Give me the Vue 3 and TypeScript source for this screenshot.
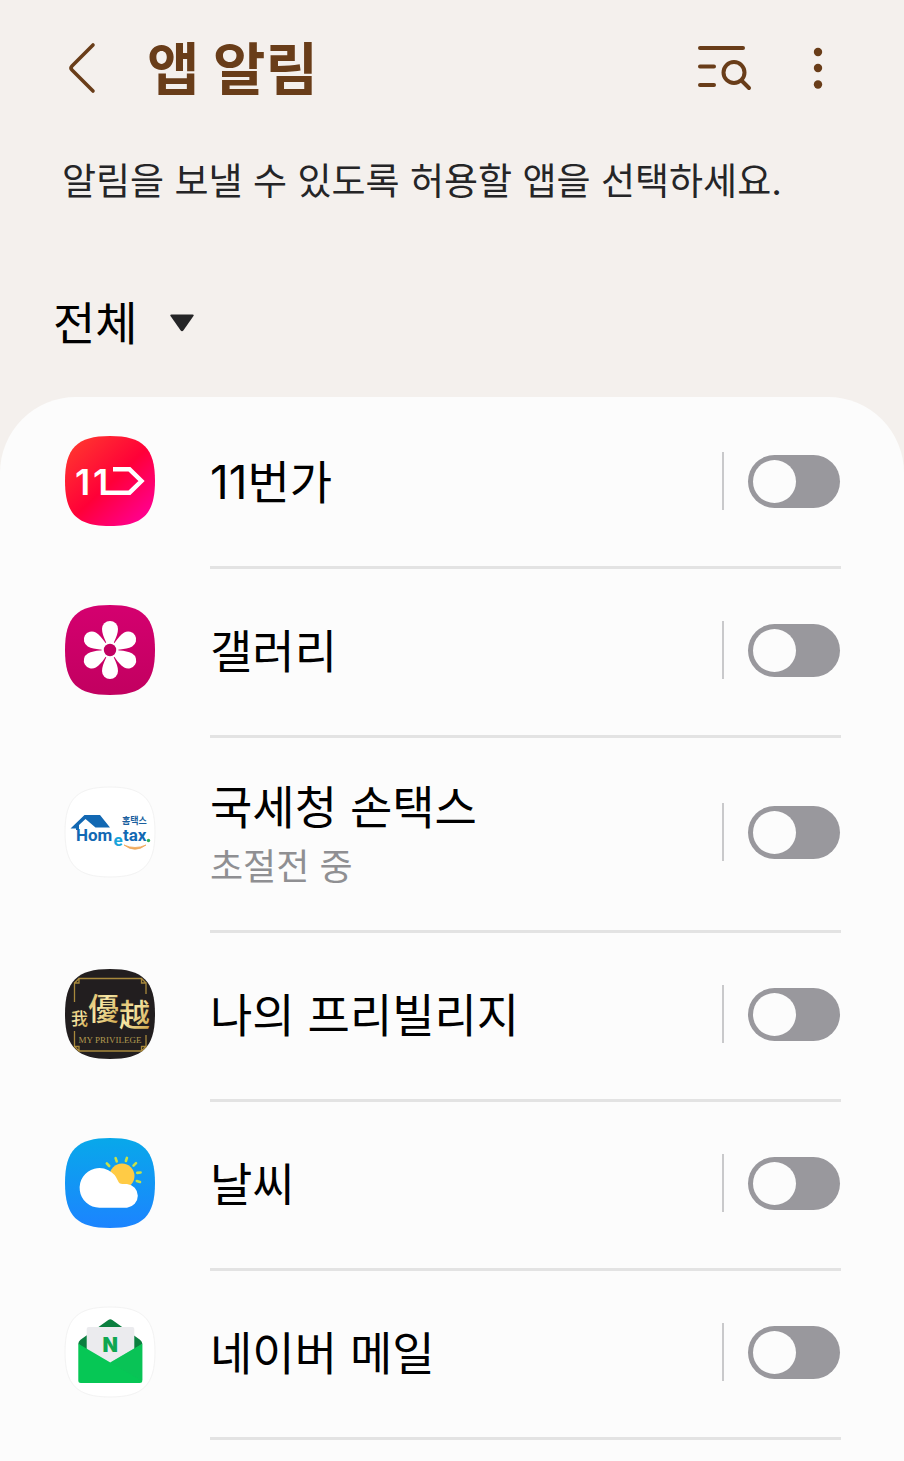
<script setup lang="ts">
import { reactive, ref } from 'vue'

interface AppEntry {
  id: string
  name: string
  status?: string
  enabled: boolean
}

const filter = ref('all')

const apps = reactive<AppEntry[]>([
  { id: 'eleven', name: '11번가', enabled: false },
  { id: 'gallery', name: '갤러리', enabled: false },
  { id: 'hometax', name: '국세청 손택스', status: '초절전 중', enabled: false },
  { id: 'privilege', name: '나의 프리빌리지', enabled: false },
  { id: 'weather', name: '날씨', enabled: false },
  { id: 'mail', name: '네이버 메일', enabled: false },
])

const squircle = 'M45 0C78 0 90 12 90 45C90 78 78 90 45 90C12 90 0 78 0 45C0 12 12 0 45 0Z'
const petals = [0, 60, 120, 180, 240, 300]
</script>

<template>
  <main class="page">
    <header class="bar">
      <button class="icon-btn" type="button" aria-label="뒤로">
        <svg width="48" height="56" viewBox="0 0 48 56" class="line">
          <path d="M35 5L14 26Q12 28 14 30L35 51" stroke-width="3.6" />
        </svg>
      </button>
      <h1 class="title">앱 알림</h1>
      <button class="icon-btn" type="button" aria-label="검색">
        <svg width="56" height="56" viewBox="0 0 56 56" class="line">
          <path d="M4 8H47M4 26.500H18M4 45H18M46 41L53 48" stroke-width="4" />
          <circle cx="38" cy="32.500" r="10.500" stroke-width="4" />
        </svg>
      </button>
      <button class="icon-btn more" type="button" aria-label="더보기">
        <svg width="24" height="56" viewBox="0 0 24 56" class="dots">
          <circle cx="12" cy="12" r="4.200" />
          <circle cx="12" cy="28" r="4.200" />
          <circle cx="12" cy="44.500" r="4.200" />
        </svg>
      </button>
    </header>

    <p class="intro">알림을 보낼 수 있도록 허용할 앱을 선택하세요.</p>

    <div class="filter">
      <select v-model="filter" class="filter-select" aria-label="앱 필터">
        <option value="all">전체</option>
      </select>
      <svg class="caret" width="24" height="18" viewBox="0 0 24 18" aria-hidden="true">
        <path d="M1.500 0.500H22.500Q24.500 0.500 23.300 2.300L13.500 16.300Q12 18.300 10.500 16.300L0.700 2.300Q-0.500 0.500 1.500 0.500Z" />
      </svg>
    </div>

    <ul class="card">
      <li v-for="app in apps" :key="app.id" class="item">
        <div class="row" :class="{ tall: app.status }">
          <svg class="app-icon" viewBox="0 0 90 90" aria-hidden="true">
            <template v-if="app.id === 'eleven'">
              <defs>
                <linearGradient id="eleven-bg" x1="0.15" y1="0.1" x2="0.9" y2="0.9">
                  <stop offset="0" stop-color="#ff3030" />
                  <stop offset="0.5" stop-color="#ff0038" />
                  <stop offset="1" stop-color="#ff0090" />
                </linearGradient>
              </defs>
              <path :d="squircle" fill="url(#eleven-bg)" />
              <text x="10 28" y="59" class="eleven-num">11</text>
              <path d="M37 56.700H64.500L76.500 45L64.500 33.300H48" fill="none" stroke="#fff" stroke-width="4.400" />
            </template>

            <template v-else-if="app.id === 'gallery'">
              <defs>
                <linearGradient id="gallery-bg" x1="0" y1="0" x2="0" y2="1">
                  <stop offset="0" stop-color="#d4006f" />
                  <stop offset="1" stop-color="#c20060" />
                </linearGradient>
              </defs>
              <path :d="squircle" fill="url(#gallery-bg)" />
              <path
                v-for="angle in petals"
                :key="angle"
                d="M45 45L40.500 36C38.700 32 37 28 37 24A8 8 0 0 1 53 24C53 28 51.300 32 49.500 36Z"
                fill="#fff"
                :transform="`rotate(${angle} 45 45)`"
              />
              <circle cx="45" cy="45" r="8.500" fill="#fff" />
              <circle cx="45" cy="45" r="6.200" fill="#c20062" />
            </template>

            <template v-else-if="app.id === 'hometax'">
              <path :d="squircle" fill="#fff" stroke="#f3f3f3" stroke-width="1" />
              <path d="M5.500 41.500L19.500 28H35L45 40.500H30.500L20.500 32L14 38V43H11V41.500Z" fill="#1268b3" />
              <text x="11" y="54" class="tax-word">Hom</text>
              <text x="48.500" y="58.500" class="tax-word tax-e">e</text>
              <text x="58" y="54" class="tax-word">tax</text>
              <circle cx="83.500" cy="53.500" r="1.700" fill="#2fae5c" />
              <path d="M59 58Q70 66.500 81 58Q70 63 59 58Z" fill="#f0a85a" stroke="#f0a85a" stroke-width="0.800" />
              <text x="57" y="37" class="tax-kr">홈택스</text>
            </template>

            <template v-else-if="app.id === 'privilege'">
              <defs>
                <linearGradient id="gold" x1="0" y1="0" x2="1" y2="1">
                  <stop offset="0" stop-color="#c99d3e" />
                  <stop offset="0.45" stop-color="#f6e7a6" />
                  <stop offset="1" stop-color="#c89a3a" />
                </linearGradient>
              </defs>
              <path :d="squircle" fill="#221e1f" />
              <path
                d="M9.500 33V14H14V9.500H76.500V14H81V25M9.500 62V77.500H14V82H76.500V77.500H81V66M9.500 14L14 9.500M76.500 9.500L81 14M9.500 77.500L14 82M76.500 82L81 77.500"
                fill="none"
                stroke="#a8893c"
                stroke-width="1.300"
              />
              <text x="6" y="56" class="gold-char gold-s">我</text>
              <text x="23" y="51" class="gold-char gold-l">優</text>
              <text x="54" y="57" class="gold-char gold-l">越</text>
              <text x="45" y="74" class="gold-latin">MY PRIVILEGE</text>
            </template>

            <template v-else-if="app.id === 'weather'">
              <defs>
                <linearGradient id="weather-bg" x1="0" y1="0" x2="0" y2="1">
                  <stop offset="0" stop-color="#08a8ea" />
                  <stop offset="1" stop-color="#1c84ff" />
                </linearGradient>
              </defs>
              <path :d="squircle" fill="url(#weather-bg)" />
              <path
                d="M44.200 28L41.800 25.400M51.700 23.400L50.600 20.200M60.900 23L61.900 19.900M68.500 27.700L71 25.200M72.200 34.900L75.600 34.500M71.800 43L75 44"
                stroke="#c5e04a"
                stroke-width="2.600"
                stroke-linecap="round"
              />
              <circle cx="57" cy="38" r="12.500" fill="#ffcb45" />
              <path
                d="M34.500 69.700A19.800 19.800 0 1 1 52.800 42.500Q54 46 57.500 46H62A11.900 11.900 0 0 1 62 69.700Z"
                fill="#fff"
              />
            </template>

            <template v-else>
              <path :d="squircle" fill="#fff" stroke="#f3f3f3" stroke-width="1" />
              <path d="M13.300 37Q13.300 34.500 15.500 32.700L43.300 13Q45.300 11.500 47.300 13L75 32.700Q77.300 34.500 77.300 37L60 50H30Z" fill="#0b7f3f" />
              <path d="M21.700 22Q21.700 20 23.700 20H67.300Q69.300 20 69.300 22V52L45.300 62L21.700 52Z" fill="#ebebee" />
              <path d="M13.300 36.700L45.300 55.500L77.300 36.700V73.500Q77.300 76 74.800 76H15.800Q13.300 76 13.300 73.500Z" fill="#06c755" />
              <path d="M45.300 55.500L76.500 73.500L77.300 73V36.700Z" fill="#0bbf57" opacity="0.500" />
              <text x="45.300" y="45" class="mail-n">N</text>
            </template>
          </svg>

          <label class="text" :for="`switch-${app.id}`">
            <span class="name">{{ app.name }}</span>
            <span v-if="app.status" class="status">{{ app.status }}</span>
          </label>

          <span class="switch-area">
            <input :id="`switch-${app.id}`" v-model="app.enabled" class="switch" type="checkbox" role="switch" />
          </span>
        </div>
      </li>
    </ul>
  </main>
</template>

<style>
body {
  background: #f4f0ed;
}
</style>

<style scoped>
.page {
  display: flex;
  flex-direction: column;
  box-sizing: border-box;
  min-height: 100vh;
  background: #f4f0ed;
  color: #000;
  font-family: Inter, "Noto Sans CJK KR", sans-serif;
}

.bar {
  display: flex;
  align-items: center;
  height: 136px;
  padding: 0 74px 0 58px;
}

.icon-btn {
  display: flex;
  flex: none;
  padding: 0;
  border: 0;
  background: none;
  cursor: pointer;
}

.more {
  margin-left: 54px;
}

.line {
  fill: none;
  stroke: #693d19;
  stroke-linecap: round;
  stroke-linejoin: round;
}

.dots {
  fill: #693d19;
}

.title {
  flex: 1;
  margin: 0 0 0 41px;
  padding-top: 4px;
  color: #693d19;
  font-size: 57px;
  font-weight: 700;
  line-height: 72px;
}

.intro {
  margin: 0;
  padding: 22px 62px 0;
  color: #252527;
  font-size: 37px;
  line-height: 48px;
}

.filter {
  position: relative;
  align-self: flex-start;
  margin: 86px 0 43px 53px;
}

.filter-select {
  display: block;
  height: 62px;
  margin: 0;
  padding: 0 58px 0 0;
  border: 0;
  appearance: none;
  background: none;
  color: #000;
  font-family: inherit;
  font-size: 46px;
  line-height: 62px;
}

.caret {
  position: absolute;
  top: 22px;
  right: 2px;
  fill: #252527;
  pointer-events: none;
}

.card {
  flex: 1;
  margin: 0;
  padding: 3px 0 0;
  border-radius: 76px 76px 0 0;
  background: #fcfcfc;
  list-style: none;
}

.item {
  padding: 0 63px 0 65px;
}

.item::after {
  display: block;
  height: 3px;
  margin-left: 145px;
  background: #e3e3e3;
  content: "";
}

.row {
  display: flex;
  align-items: center;
  box-sizing: border-box;
  min-height: 166px;
  padding-bottom: 4px;
}

.row.tall {
  min-height: 192px;
}

.app-icon {
  flex: none;
  width: 90px;
  height: 90px;
  overflow: visible;
}

.text {
  display: flex;
  flex: 1;
  flex-direction: column;
  margin-left: 55px;
  padding-top: 2px;
}

.name {
  font-size: 46px;
  line-height: 68px;
}

.status {
  color: #8f8f92;
  font-size: 36px;
  line-height: 52px;
}

.switch-area {
  display: flex;
  flex: none;
  align-items: center;
  height: 58px;
  padding-left: 24px;
  border-left: 2px solid #c9c9cb;
}

.switch {
  width: 92px;
  height: 53px;
  margin: 0 1px 0 0;
  padding: 5px;
  box-sizing: border-box;
  border-radius: 27px;
  appearance: none;
  background: #99989d;
  cursor: pointer;
}

.switch::before {
  display: block;
  width: 43px;
  height: 43px;
  border-radius: 50%;
  background: #fcfcfc;
  content: "";
}

.switch:checked {
  background: #693d19;
}

.switch:checked::before {
  margin-left: auto;
}

.eleven-num {
  fill: #fff;
  font: 600 36px Inter, sans-serif;
}

.tax-word {
  fill: #1268b3;
  font: 700 17px Roboto, sans-serif;
}

.tax-e {
  fill: #18a5dc;
}

.tax-kr {
  fill: #1b5f9e;
  font: 700 9px "Noto Sans CJK KR", sans-serif;
}

.gold-char {
  fill: url(#gold);
  font-family: "Noto Sans CJK TC", sans-serif;
  font-weight: 500;
}

.gold-s {
  font-size: 17px;
}

.gold-l {
  font-size: 31px;
}

.gold-latin {
  fill: #b39a50;
  font: 400 9px "Liberation Serif", serif;
  text-anchor: middle;
}

.mail-n {
  fill: #0fa650;
  font: 900 20px Inter, sans-serif;
  text-anchor: middle;
}
</style>
